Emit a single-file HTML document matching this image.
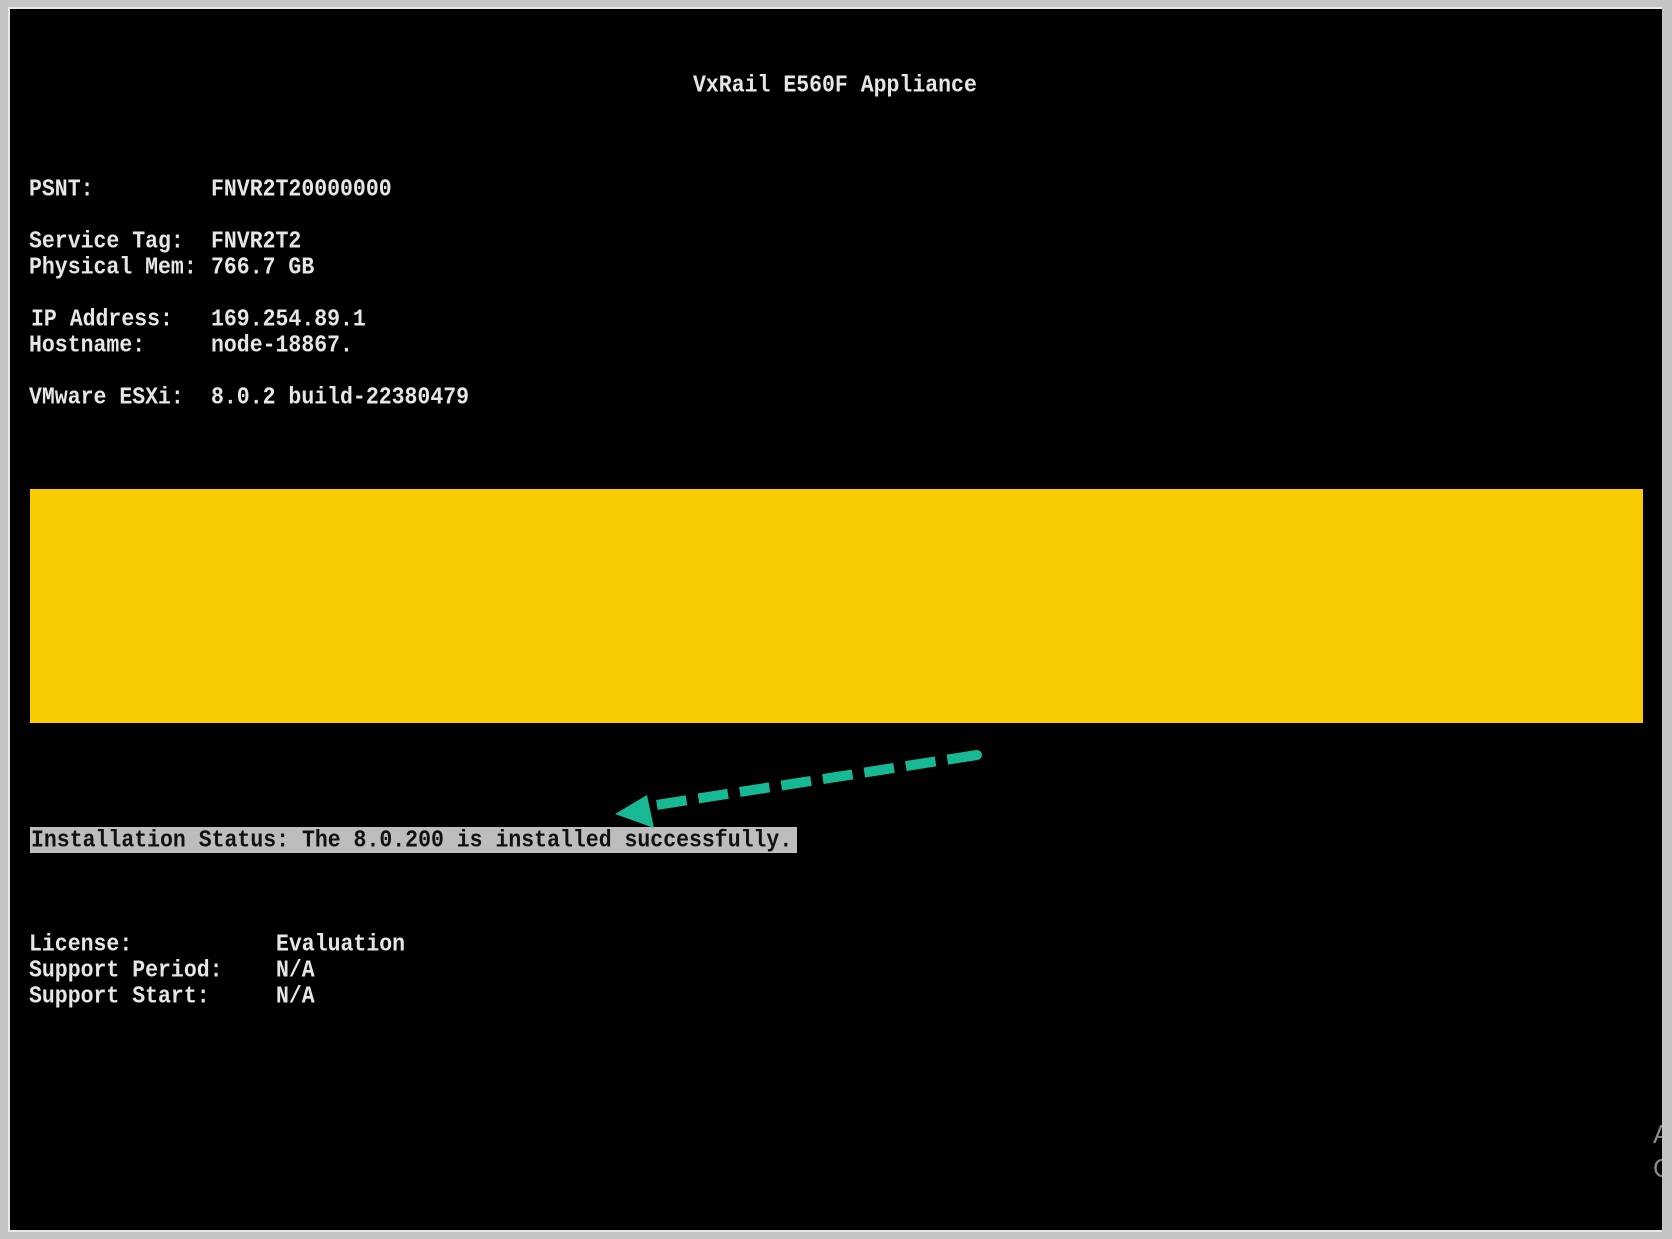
<!DOCTYPE html>
<html><head><style>
html,body{margin:0;padding:0;}
body{width:1672px;height:1239px;background:#c4c4c4;position:relative;overflow:hidden;}
#scr{position:absolute;left:8px;top:7px;width:1656px;height:1225px;background:#000;border:2px solid #e8e8e8;box-sizing:border-box;}
.t{position:absolute;font-family:"Liberation Mono",monospace;font-weight:bold;font-size:21.5px;color:#e6e6e6;white-space:pre;line-height:26px;transform:scaleY(1.12);transform-origin:left center;}
</style></head><body>
<div id="scr"></div>
<div class="t" style="left:693px;top:73px">VxRail E560F Appliance</div>
<div class="t" style="left:29px;top:177px">PSNT:</div><div class="t" style="left:211px;top:177px">FNVR2T20000000</div>
<div class="t" style="left:29px;top:229px">Service Tag:</div><div class="t" style="left:211px;top:229px">FNVR2T2</div>
<div class="t" style="left:29px;top:255px">Physical Mem:</div><div class="t" style="left:211px;top:255px">766.7 GB</div>
<div class="t" style="left:31px;top:307px">IP Address:</div><div class="t" style="left:211px;top:307px">169.254.89.1</div>
<div class="t" style="left:29px;top:333px">Hostname:</div><div class="t" style="left:211px;top:333px">node-18867.</div>
<div class="t" style="left:29px;top:385px">VMware ESXi:</div><div class="t" style="left:211px;top:385px">8.0.2 build-22380479</div>
<div style="position:absolute;left:30px;top:489px;width:1613px;height:234px;background:#f8cc00"></div>
<div style="position:absolute;left:30px;top:827px;width:767px;height:26px;background:#bdbdbd"></div>
<div class="t" style="left:31px;top:828px;color:#111">Installation Status: The 8.0.200 is installed successfully.</div>
<div class="t" style="left:29px;top:932px">License:</div><div class="t" style="left:276px;top:932px">Evaluation</div>
<div class="t" style="left:29px;top:958px">Support Period:</div><div class="t" style="left:276px;top:958px">N/A</div>
<div class="t" style="left:29px;top:984px">Support Start:</div><div class="t" style="left:276px;top:984px">N/A</div>
<svg style="position:absolute;left:0;top:0" width="1672" height="1239">
<line x1="977" y1="755" x2="650" y2="806" stroke="#17b995" stroke-width="10" stroke-dasharray="30 12" stroke-linecap="butt"/>
<circle cx="977" cy="755" r="5" fill="#17b995"/>
<polygon points="615,814 647,795 654,828" fill="#17b995"/>
</svg>
<div style="position:absolute;left:1653px;top:1117px;font-family:'Liberation Sans',sans-serif;font-size:26px;color:#888;line-height:34px">A<br>G</div>
<div style="position:absolute;left:1662px;top:0;width:10px;height:1239px;background:#c4c4c4"></div>
</body></html>
